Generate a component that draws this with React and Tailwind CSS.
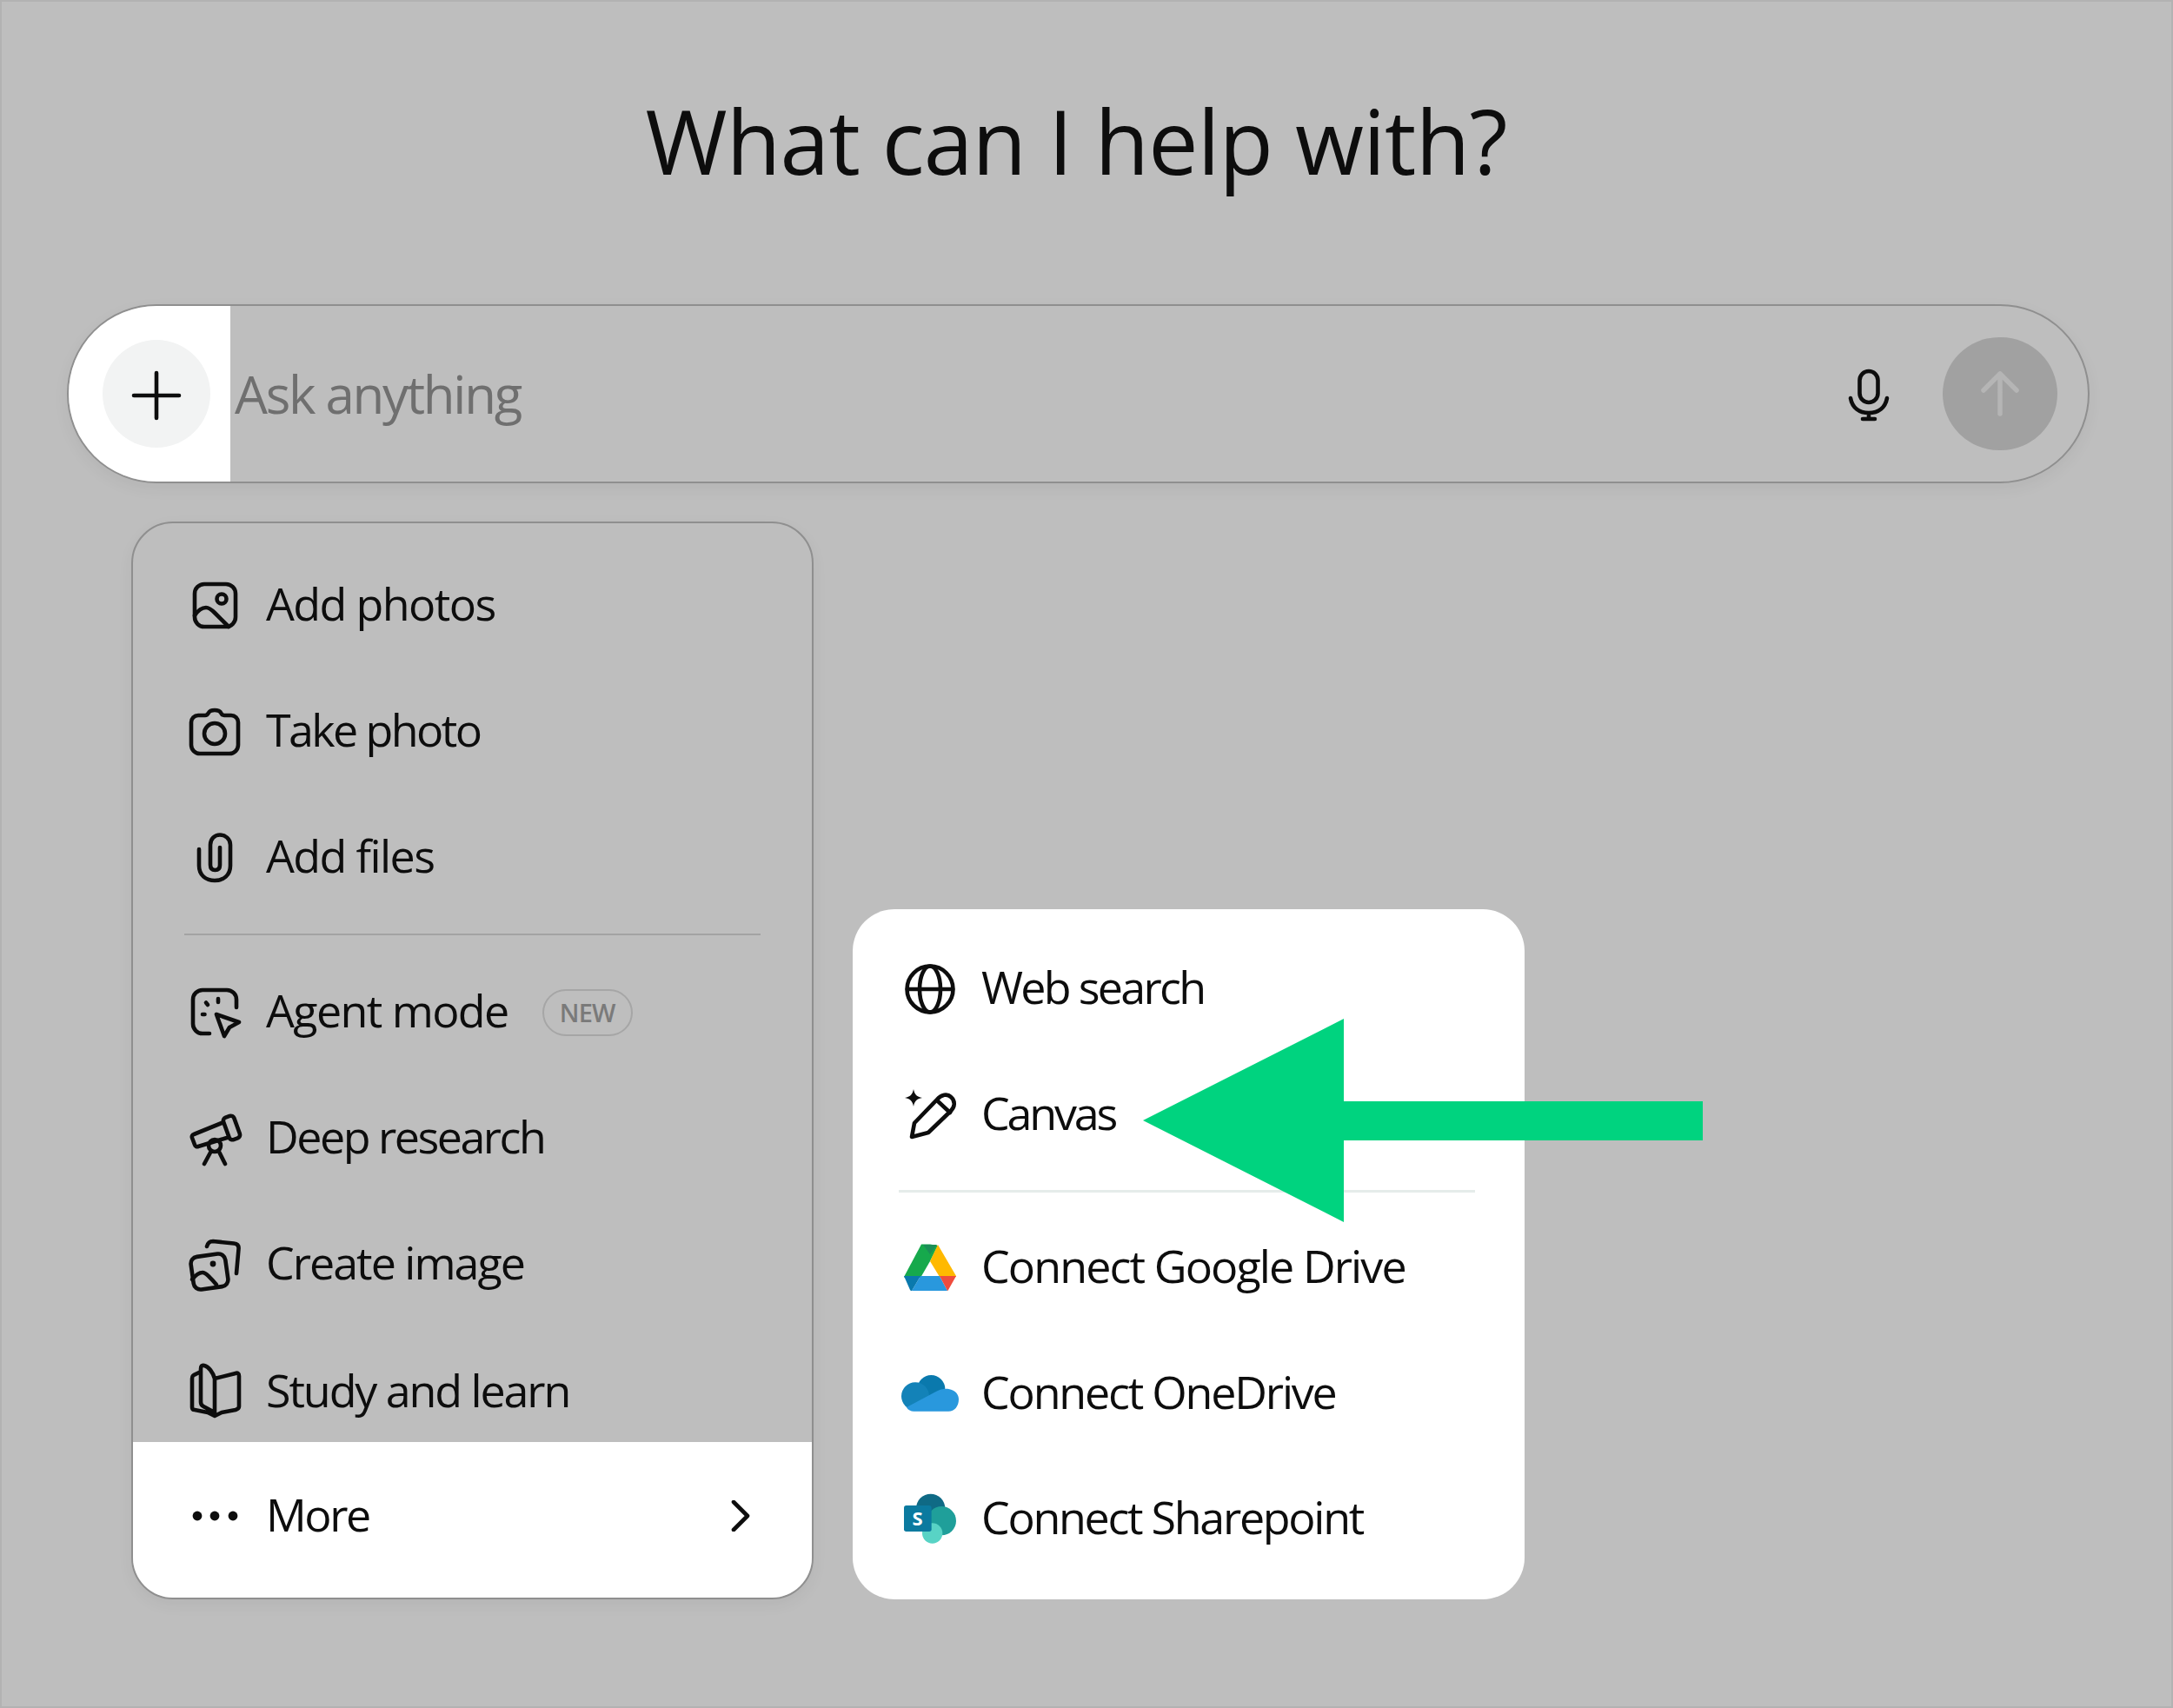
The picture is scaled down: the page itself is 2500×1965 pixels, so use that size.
import React from "react";

const S = ({ children, vb = "0 0 60 60", w = 60, h = 60, sw = 4.6 }) => (
  <svg width={w} height={h} viewBox={vb} fill="none" stroke="#0d0d0d" strokeWidth={sw} strokeLinecap="round" strokeLinejoin="round" className="shrink-0 overflow-visible">
    {children}
  </svg>
);

const Photo = () => (
  <S>
    <rect x="7" y="5" width="47" height="49" rx="11" />
    <circle cx="38" cy="22" r="5.5" />
    <path d="M7 41C11 35 16 32 20 32C24 32 27 35 30 38L46 54" />
  </S>
);
const Camera = () => (
  <S>
    <path d="M3 19a8 8 0 0 1 8-8h8c2 0 3-1 4-3c1-2 3-3 7-3s6 1 7 3c1 2 2 3 4 3h8a8 8 0 0 1 8 8v26a10 10 0 0 1-10 10H13a10 10 0 0 1-10-10z" />
    <circle cx="30" cy="32" r="12" />
  </S>
);
const Clip = () => (
  <S>
    <path d="M12 20V39C12 50 20 56 30 56C40 56 48 50 48 39V15C48 8 42 3.5 36 3.5C30 3.5 25 8 25 15V38C25 42 27 44 30.5 44C34 44 36 42 36 38V18" />
  </S>
);
const Agent = () => (
  <S>
    <path d="M55 24V15a11 11 0 0 0-11-11H16A11 11 0 0 0 5 15V43a11 11 0 0 0 11 11H24" />
    <path d="M20 18.5L22 21M34 14V18M16 32H18.5" />
    <path d="M32 32L58 41L47 47L41 57Z" />
  </S>
);
const Telescope = () => (
  <S>
    <rect x="43" y="4" width="13" height="27" rx="4" transform="rotate(-20 49.5 17.5)" />
    <path d="M38 12L6 25a3 3 0 0 0-2 4l3 8a3 3 0 0 0 4 2L44 29" />
    <circle cx="30" cy="38" r="7" />
    <path d="M25 46L18 59M35.5 46L42 59" />
  </S>
);
const Images = () => (
  <S>
    <rect x="4" y="19" width="40" height="38" rx="8" transform="rotate(-8 24 38)" />
    <circle cx="28" cy="29" r="3.4" fill="#0d0d0d" stroke="none" />
    <path d="M4 47C8 42 12 39 16 39C20 39 26 46 32 53" />
    <path d="M21 9C22 5 24 3 28 3L52 5.5C56 6 58 8 57.5 12L55 40" />
  </S>
);
const Book = () => (
  <S>
    <path d="M14 9L8 12C5 13 4 14 4 17V50C4 52 5 53 7 53L22 56L30 60L38 56L54 53C57 52 58 51 58 49V14C58 11 56 10 54 11L30 17C28 10 23 3 18 2C15 1 14 3 14 6V44C14 46 15 48 17 49L30 56V17" />
  </S>
);
const Dots = () => (
  <S>
    <circle cx="10" cy="30" r="5.4" fill="#0d0d0d" stroke="none" />
    <circle cx="30" cy="30" r="5.4" fill="#0d0d0d" stroke="none" />
    <circle cx="51" cy="30" r="5.4" fill="#0d0d0d" stroke="none" />
  </S>
);
const Globe = () => (
  <S>
    <circle cx="30" cy="30" r="26.5" />
    <ellipse cx="30" cy="30" rx="12" ry="26.5" />
    <path d="M4 30H56" />
  </S>
);
const Pencil = () => (
  <S>
    <path d="M9 55L12 39L38 12C43 6 50 5 54 9C59 13 59 20 54 25L28 50Z" />
    <path d="M38 13L53 27" />
    <path d="M11 0C12 6 15 9 21 10C15 11 12 14 11 20C10 14 7 11 1 10C7 9 10 6 11 0Z" fill="#0d0d0d" stroke="none" />
  </S>
);
const Drive = () => (
  <svg width="60" height="56" viewBox="0 0 60 56" className="shrink-0">
    <path d="M20 0.5H30L39 2L30 20L19 39H1L0 38Z" fill="#16a94c" />
    <path d="M22 1H38L30 12Z" fill="#1a8f57" />
    <path d="M39 1L60 37V38H41L30 20Z" fill="#ffb900" />
    <path d="M19 37H41L50 54H9Z" fill="#2998dd" />
    <path d="M0 37H19L9 54C8 54 7 53.5 7 53Z" fill="#0a79ad" />
    <path d="M41 37H60L51 53C50.5 54 50 54 50 54Z" fill="#ef4c3d" />
  </svg>
);
const OneDrive = () => (
  <svg width="66" height="42" viewBox="52 37 198 126" className="shrink-0">
    <circle cx="155" cy="85" r="48" fill="#0a79ad" />
    <circle cx="100" cy="110" r="48" fill="#1382b8" />
    <path d="M70 148L170 95C185 85 205 83 215 85C240 90 250 105 250 120C250 145 235 162 215 162H95C85 162 75 158 70 148Z" fill="#2998dd" />
  </svg>
);
const SharePoint = () => (
  <svg width="60" height="58" viewBox="60 445 180 174" className="shrink-0">
    <circle cx="152" cy="497" r="50" fill="#0f6a85" />
    <circle cx="190" cy="540" r="50" fill="#1f9f9a" />
    <circle cx="158" cy="583" r="35" fill="#58d3c5" />
    <rect x="60" y="487" width="95" height="90" rx="8" fill="#0b7a9f" />
    <text x="107" y="556" textAnchor="middle" fontSize="66" fontWeight="700" fill="#fff" style={{ fontFamily: "'Open Sans', sans-serif" }}>S</text>
  </svg>
);

const Row = ({ icon, label, track = "tracking-[-1.6px]", cls = "h-[145px] items-center", pad = "pl-[64px]", children }) => (
  <div className={`flex gap-[29px] pr-[60px] ${pad} ${cls}`}>
    <span className="flex h-[60px] w-[60px] shrink-0 items-center justify-center">{icon}</span>
    <span className={`whitespace-nowrap pb-[5px] text-[52px] leading-[60px] text-[#0d0d0d] ${track}`}>{label}</span>
    {children}
  </div>
);

export default function App() {
  return (
    <div className="relative flex h-[1965px] w-[2500px] flex-col overflow-hidden bg-[#bebebe] shadow-[inset_0_0_0_2px_#b2b2b2]" style={{ fontFamily: "'Open Sans', 'Liberation Sans', sans-serif" }}>
      <h1 className="mt-[87px] h-[150px] pr-[24px] text-center text-[102px] font-normal leading-[150px] tracking-[-0.8px] text-[#0d0d0d]">What can I help with?</h1>

      <div className="ml-[77px] mt-[113px] flex h-[206px] w-[2327px] items-center overflow-hidden rounded-full border-2 border-[#8f8f8f] shadow-[0_6px_18px_rgba(0,0,0,0.05)]">
        <div className="flex h-full w-[186px] shrink-0 items-center bg-white pl-[39px]">
          <div className="flex h-[124px] w-[124px] items-center justify-center rounded-full bg-[#f2f3f3]">
            <S><path d="M30 6V58M4 32H56" /></S>
          </div>
        </div>
        <span className="ml-[5px] whitespace-nowrap text-[60px] font-normal leading-[70px] tracking-[-2.3px] text-[#6f6f6f]">Ask anything</span>
        <div className="ml-auto mr-[35px] flex items-center gap-[55px]">
          <S>
            <rect x="19.5" y="4" width="21" height="36" rx="10.5" />
            <path d="M9 35C11 46 19 52 30 52C41 52 49 46 51 35M30 52V59M23 59H37" />
          </S>
          <div className="flex h-[130px] w-[132px] items-center justify-center rounded-full bg-[#a1a1a1]">
            <svg width="44" height="52" viewBox="0 0 44 52" fill="none" stroke="#b5b5b5" strokeWidth="5.5" strokeLinecap="round" strokeLinejoin="round">
              <path d="M22 49V3M3 22L22 3L41 22" />
            </svg>
          </div>
        </div>
      </div>

      <div className="ml-[151px] mt-[44px] flex items-end gap-[45px]">
        <div className="flex h-[1240px] w-[785px] flex-col overflow-hidden rounded-[48px] border-2 border-[#8f8f8f] pt-[22px] shadow-[0_6px_18px_rgba(0,0,0,0.05)]">
          <Row icon={<Photo />} label="Add photos" />
          <Row icon={<Camera />} label="Take photo" track="tracking-[-2.6px]" />
          <Row icon={<Clip />} label="Add files" />
          <div className="mx-[59px] mb-[16px] mt-[15px] h-[2px] bg-[#a3a3a3]" />
          <Row icon={<Agent />} label="Agent mode">
            <span className="ml-[10px] flex h-[54px] w-[104px] items-center justify-center rounded-full border-2 border-[#a6a6a6] text-[29px] font-semibold tracking-[-0.8px] text-[#7a7a7a]">NEW</span>
          </Row>
          <Row icon={<Telescope />} label="Deep research" track="tracking-[-2.5px]" />
          <Row icon={<Images />} label="Create image" track="tracking-[-2px]" />
          <Row icon={<Book />} label="Study and learn" track="tracking-[-2.1px]" cls="h-[132px] items-start pt-[42px]" />
          <Row icon={<Dots />} label="More" track="tracking-[-2.4px]" cls="mt-auto h-[179px] items-center bg-white pb-[9px]">
            <svg width="22" height="36" viewBox="0 0 22 36" fill="none" stroke="#0d0d0d" strokeWidth="4.6" strokeLinecap="round" strokeLinejoin="round" className="ml-auto mr-[11px]">
              <path d="M3 2L19 18L3 34" />
            </svg>
          </Row>
        </div>

        <div className="flex h-[794px] w-[773px] flex-col rounded-[48px] bg-white pt-[19px]">
          <Row icon={<Globe />} label="Web search" pad="pl-[59px]" track="tracking-[-2.7px]" />
          <Row icon={<Pencil />} label="Canvas" pad="pl-[59px]" track="tracking-[-3.2px]" />
          <div className="mb-[14px] ml-[53px] mr-[57px] mt-[14px] h-[3px] bg-[#e5ecea]" />
          <Row icon={<Drive />} label="Connect Google Drive" pad="pl-[59px]" track="tracking-[-1.9px]" />
          <Row icon={<OneDrive />} label="Connect OneDrive" pad="pl-[59px]" track="tracking-[-2.2px]" cls="h-[144px] items-center" />
          <Row icon={<SharePoint />} label="Connect Sharepoint" pad="pl-[59px]" track="tracking-[-2.3px]" cls="h-[144px] items-center" />
        </div>
      </div>

      <svg width="646" height="236" viewBox="0 0 646 236" className="absolute left-[1314px] top-[1171px]">
        <path d="M1 118L232 1V96H645V141H232V235Z" fill="#00d37f" />
      </svg>
    </div>
  );
}
